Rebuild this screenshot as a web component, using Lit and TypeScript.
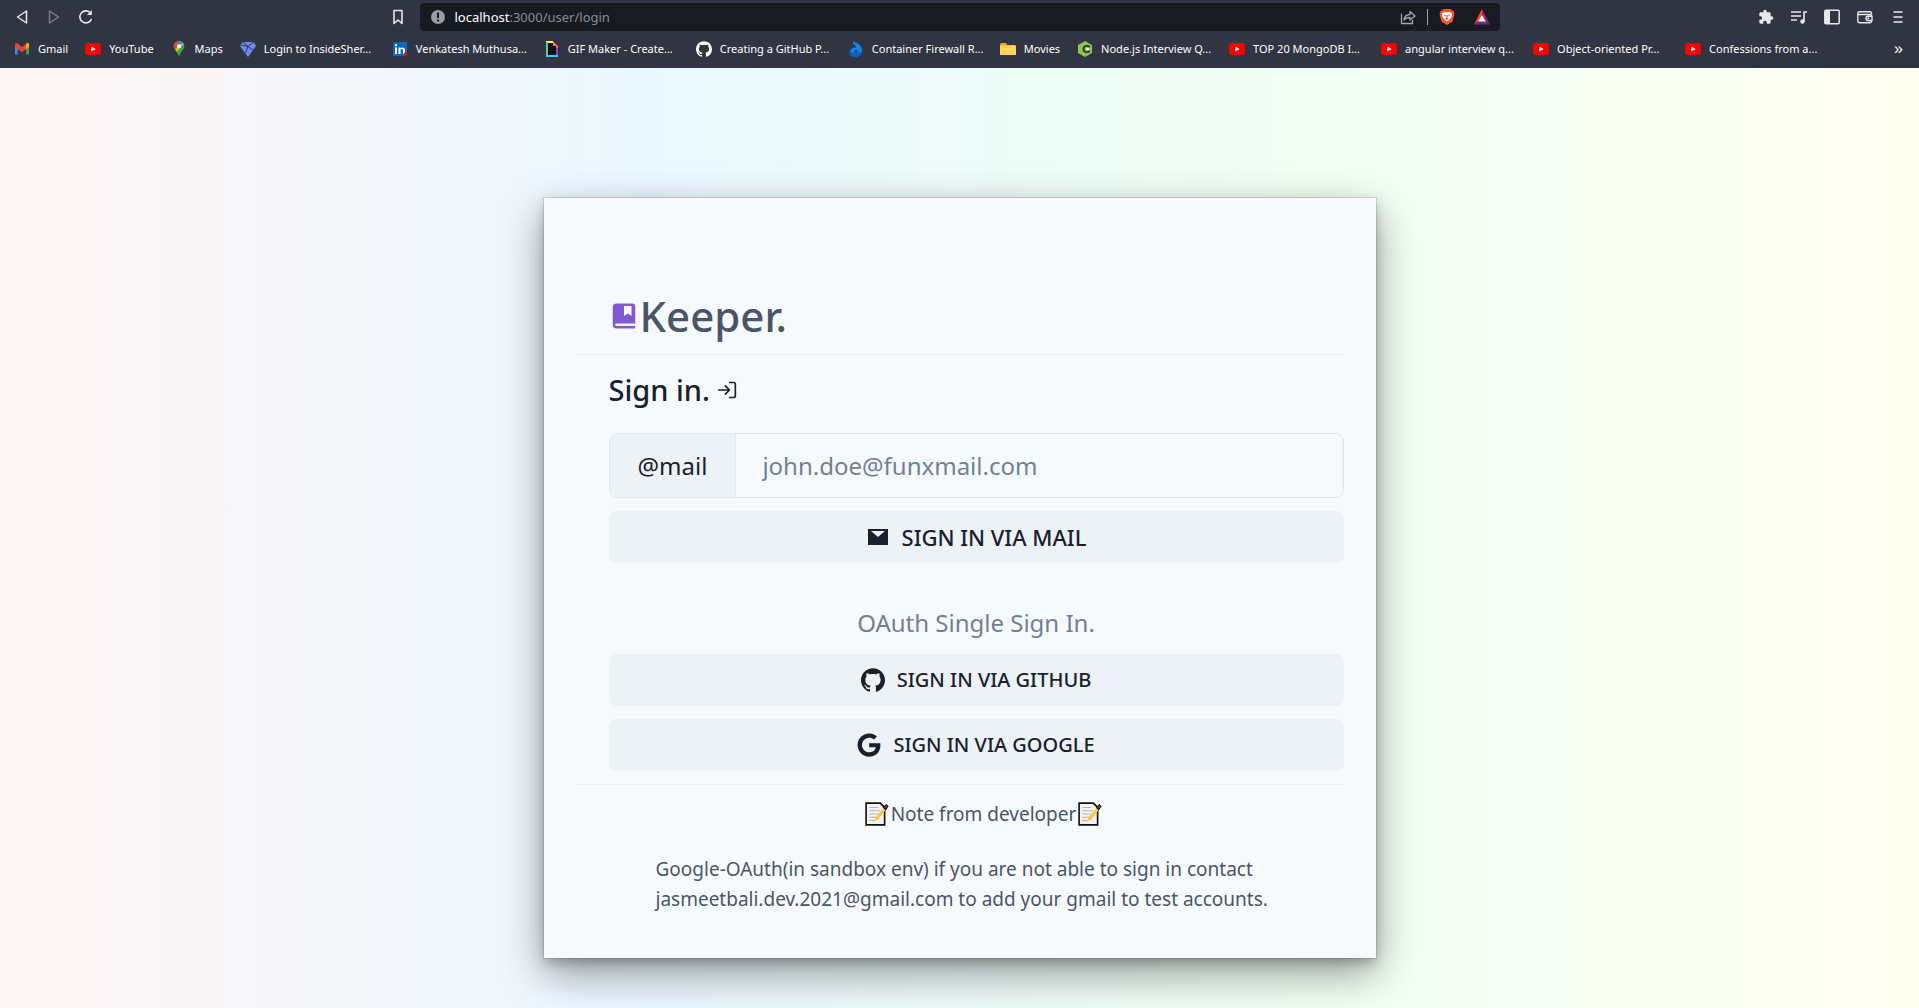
import { LitElement, html, css, svg } from "lit";
import { customElement } from "lit/decorators.js";

const youtube = html`<svg viewBox="0 0 16 16"><rect y="2" width="16" height="12" rx="3" fill="#f00" /><path d="M6.4 5.6v4.8L10.6 8z" fill="#fff" /></svg>`;
const githubPath = svg`<path fill="currentColor" d="M12 .297c-6.63 0-12 5.373-12 12 0 5.303 3.438 9.8 8.205 11.385.6.113.82-.258.82-.577 0-.285-.01-1.04-.015-2.04-3.338.724-4.042-1.61-4.042-1.61C4.422 18.07 3.633 17.7 3.633 17.7c-1.087-.744.084-.729.084-.729 1.205.084 1.838 1.236 1.838 1.236 1.07 1.835 2.809 1.305 3.495.998.108-.776.417-1.305.76-1.605-2.665-.3-5.466-1.332-5.466-5.93 0-1.31.465-2.38 1.235-3.22-.135-.303-.54-1.523.105-3.176 0 0 1.005-.322 3.3 1.23.96-.267 1.98-.399 3-.405 1.02.006 2.04.138 3 .405 2.28-1.552 3.285-1.23 3.285-1.23.645 1.653.24 2.873.12 3.176.765.84 1.23 1.91 1.23 3.22 0 4.61-2.805 5.625-5.475 5.92.42.36.81 1.096.81 2.22 0 1.606-.015 2.896-.015 3.286 0 .315.21.69.825.57C20.565 22.092 24 17.592 24 12.297c0-6.627-5.373-12-12-12" />`;

const bookmarks = [
  { label: "Gmail", wide: false, icon: html`<svg viewBox="0 0 16 16"><path d="M1 3.500v10h2.800V7.600L1 5z" fill="#4285f4" /><path d="M12.200 7.600v5.900H15V5z" fill="#34a853" /><path d="M1 3.500V6l7 5.200L15 6V3.500c0-1.300-1.500-1.800-2.500-1L8 6 3.500 2.500C2.500 1.700 1 2.200 1 3.500z" fill="#ea4335" /><path d="M12.200 2.800V8L15 6V3.500c0-1.500-1.800-1.700-2.800-.7z" fill="#fbbc04" /></svg>` },
  { label: "YouTube", wide: false, icon: youtube },
  { label: "Maps", wide: false, icon: html`<svg viewBox="0 0 16 16"><path d="M8 0C5 0 2.700 2.300 2.700 5.300 2.700 9 7 11 8 16c1-5 5.300-7 5.300-10.700C13.300 2.300 11 0 8 0z" fill="#34a853" /><path d="M8 0c3 0 5.300 2.300 5.300 5.300L10 5.300 6 1z" fill="#4285f4" /><path d="M2.800 4.500C3.100 2 5.300 0 8 0L4.300 8.600C3.400 7.500 2.500 6 2.800 4.500z" fill="#ea4335" /><path d="M4.200 8.600 10.500 2.400l2 .5L5.800 10.700z" fill="#fbbc04" /><circle cx="8" cy="5.300" r="2" fill="#fff" /></svg>` },
  { label: "Login to InsideSher...", wide: true, icon: html`<svg viewBox="0 0 16 16"><path d="M2.500 1h11L16 5 8 16 0 5z" fill="#6b8af2" /><path d="M1 4l7 1.500L13.500 1M8 5.500 5.500 12M8 5.500l5 3.500M3 1l5 4.500" stroke="#313443" fill="none" /></svg>` },
  { label: "Venkatesh Muthusa...", wide: true, icon: html`<svg viewBox="0 0 16 16"><rect x="1" y="1" width="14" height="14" fill="#0a66c2" /><path d="M3 6.500h2V13H3zM3 3.300h2v2H3zM6.500 6.500h2v1c1.200-1.800 4.500-1.500 4.500 1.500v4h-2V9.500c0-2-2.500-1.700-2.500 0V13h-2z" fill="#fff" /><circle cx="13.500" cy="13.500" r="2" fill="#d11" /></svg>` },
  { label: "GIF Maker - Create...", wide: true, icon: html`<svg viewBox="0 0 16 16"><path d="M2 0h7l5 5v11H2z" fill="#121212" /><path d="M2 0h7v2H2z" fill="#fff35c" /><path d="M2 1h2v14H2z" fill="#5fc98a" /><path d="M2 14h12v2H2z" fill="#3cf" /><path d="M12 6h2v8h-2z" fill="#7b4fb5" /><path d="M9 0l5 5v2h-2V5H9z" fill="#f66" /></svg>` },
  { label: "Creating a GitHub P...", wide: true, icon: html`<svg viewBox="0 0 24 24">${githubPath}</svg>` },
  { label: "Container Firewall R...", wide: true, icon: html`<svg viewBox="0 0 16 16"><path d="M5 0c2 2 9 2.500 9 9 0 4-3 7-6.500 7S2 13.500 2 11s2-4.500 6-4.500C9 4.500 4 4 5 0z" fill="#0b84f0" /><path d="M2 11c2 1 6 1 11.700 0C12.500 15 9.500 16 7.500 16 4 16 2 13.500 2 11z" fill="#0561c7" /><circle cx="8" cy="10.300" r="1.600" fill="#24406e" /></svg>` },
  { label: "Movies", wide: false, icon: html`<svg viewBox="0 0 16 16"><path d="M0 3.500C0 2.600.600 2 1.500 2H6l1.500 2h7c.9 0 1.500.6 1.500 1.500v7c0 .9-.6 1.500-1.500 1.500h-13C.600 14 0 13.400 0 12.500z" fill="#e8aa27" /><rect y="4.500" width="16" height="9.500" rx="1" fill="#ffd35c" /></svg>` },
  { label: "Node.js Interview Q...", wide: true, icon: html`<svg viewBox="0 0 16 16"><path d="M8 0l7 4v8l-7 4-7-4V4z" fill="#8cc84b" /><path d="M13 6C11 4 6.500 4.500 6.500 8s4.500 4 6.500 2" fill="none" stroke="#313443" stroke-width="1.800" /><path d="M9.500 7h2.500v2H9.500z" fill="#fff" /></svg>` },
  { label: "TOP 20 MongoDB I...", wide: true, icon: youtube },
  { label: "angular interview q...", wide: true, icon: youtube },
  { label: "Object-oriented Pr...", wide: true, icon: youtube },
  { label: "Confessions from a...", wide: true, icon: youtube },
];

@customElement("browser-bar")
class BrowserBar extends LitElement {
  static styles = css`
    :host { display: block; background: #313443; color: #fff; font: 11px/16px "Noto Sans", "Open Sans", sans-serif; }
    svg { display: block; width: 16px; height: 16px; flex: none; }
    button { display: block; padding: 0; border: 0; background: none; color: #e8e8ec; }
    .toolbar { display: grid; grid-template-columns: 1fr minmax(0, 1080px) 1fr; align-items: center; padding-top: 3px; }
    .nav { display: flex; align-items: center; gap: 16px; padding: 0 14px; }
    .nav .save { margin-left: auto; }
    .dim { opacity: 0.4; }
    .address { display: flex; align-items: center; gap: 9px; height: 28px; box-sizing: border-box; padding: 0 10px; border-radius: 4px; background: #181a21; }
    .url { flex: 1; min-width: 0; font-size: 13px; color: #8b8d95; }
    .host { color: #fff; }
    .rule { width: 1px; height: 16px; background: #a5a6ab; }
    .badges { display: flex; align-items: center; gap: 11px; }
    .badges .bat { margin-left: 8px; }
    .tools { display: flex; justify-content: flex-end; gap: 17px; padding: 0 13px; }
    .bookmarks { display: flex; align-items: center; height: 37px; box-sizing: border-box; padding: 0 16px 2px 14px; }
    .bookmark { display: flex; align-items: center; gap: 8px; padding-right: 17px; box-sizing: border-box; color: inherit; text-decoration: none; white-space: nowrap; }
    .wide { width: 152px; }
    .more { margin-left: auto; font-size: 16px; color: #fff; }
  `;

  render() {
    return html`
      <div class="toolbar">
        <nav class="nav" aria-label="History">
          <button aria-label="Back"><svg viewBox="0 0 16 16"><path d="M12.500 2v12L3.500 8z" fill="none" stroke="currentColor" stroke-width="1.500" stroke-linejoin="round" /></svg></button>
          <button class="dim" aria-label="Forward"><svg viewBox="0 0 16 16"><path d="M3.500 2v12l9-6z" fill="none" stroke="currentColor" stroke-width="1.500" stroke-linejoin="round" /></svg></button>
          <button aria-label="Reload"><svg viewBox="0 0 16 16"><path d="M13.500 10A6 6 0 1 1 12 3.500" fill="none" stroke="currentColor" stroke-width="1.600" /><path d="M13.800 1v5H9z" fill="currentColor" /></svg></button>
          <button class="save" aria-label="Bookmark this page"><svg viewBox="0 0 16 16"><path d="M4 1.500h8v13L8 11l-4 3.500z" fill="none" stroke="currentColor" stroke-width="1.600" stroke-linejoin="round" /></svg></button>
        </nav>
        <div class="address">
          <svg viewBox="0 0 16 16"><circle cx="8" cy="8" r="7" fill="#9a9ca5" /><path d="M7 3.500h2v5.500H7zM7 10.500h2v2H7z" fill="#181a21" /></svg>
          <span class="url"><span class="host">localhost</span>:3000/user/login</span>
          <div class="badges">
            <button aria-label="Share"><svg viewBox="0 0 16 16"><path d="M1.500 4.500v10h11V11" fill="none" stroke="#a5a6ab" stroke-width="1.300" /><path d="M4 11c.5-4 3-5.500 6-5.500V2.500L15 7l-5 4V8.500C7.500 8.500 5.500 9 4 11z" fill="none" stroke="#a5a6ab" stroke-width="1.300" stroke-linejoin="round" /></svg></button>
            <span class="rule"></span>
            <button aria-label="Shields"><svg viewBox="0 0 16 16"><path d="M4.500 0h7l1.300 1.300L14.500 2l1 3-2 7.500L8 16l-5.500-3.500L.500 5l1-3 1.700-.7z" fill="#fb542b" /><path d="M3 4.500 5.500 3h5L13 4.500 12.500 8 10 11l-2 1.500L6 11 3.500 8z" fill="#fff" /><path d="M4.500 5.500l2.500.8-1 1.200zM11.500 5.500 9 6.300l1 1.200zM7.300 6h1.400v3l1 1L8 10.700 6.300 10l1-1z" fill="#fb542b" /></svg></button>
            <button class="bat" aria-label="Rewards"><svg viewBox="0 0 16 16"><path d="M8 0v6.500L4.500 12.500 0 15.500z" fill="#ff4724" /><path d="M8 0l8 15.500-4.500-3L8 6.500z" fill="#9e1f63" /><path d="M0 15.500h16l-4.500-3.500h-7z" fill="#662d91" /><path d="M8 6l3.800 6.500H4.200z" fill="#fff" /></svg></button>
          </div>
        </div>
        <div class="tools">
          <button aria-label="Extensions"><svg viewBox="0 0 24 24"><path d="M20.500 11H19V7c0-1.100-.9-2-2-2h-4V3.500a2.500 2.500 0 0 0-5 0V5H4c-1.100 0-1.990.9-1.990 2v3.800H3.500a2.700 2.700 0 0 1 0 5.400H2V20c0 1.100.9 2 2 2h3.800v-1.500a2.700 2.700 0 0 1 5.400 0V22H17c1.100 0 2-.9 2-2v-4h1.500a2.500 2.500 0 0 0 0-5z" fill="currentColor" /></svg></button>
          <button aria-label="Media"><svg viewBox="0 0 16 16"><path d="M0 3h10M0 7h10M0 11h6M13 12.500V3h3" fill="none" stroke="currentColor" stroke-width="1.600" /><circle cx="11.500" cy="12.500" r="2.200" fill="currentColor" /></svg></button>
          <button aria-label="Sidebar"><svg viewBox="0 0 16 16"><rect x=".8" y="1.300" width="14.400" height="13.400" rx="1" fill="none" stroke="currentColor" stroke-width="1.500" /><path d="M1 1.500h5v13H1z" fill="currentColor" /></svg></button>
          <button aria-label="Wallet"><svg viewBox="0 0 16 16"><path d="M14.500 5V4.500c0-1-.5-1.700-1.500-1.700H2.500C1.500 2.800.800 3.500.800 4.500v7c0 1.500.7 2.200 2 2.200H13c1 0 1.500-.7 1.500-1.700M1 5.500h12c1.500 0 1.500.5 1.500 1.500M15 7.200h-4c-2.700 0-2.700 4.300 0 4.300h4z" fill="none" stroke="currentColor" stroke-width="1.400" /><circle cx="11.300" cy="9.300" r="1" fill="currentColor" /></svg></button>
          <button aria-label="Menu"><svg viewBox="0 0 16 16"><path d="M3.500 3h9M3.500 8h9M3.500 13h9" stroke="currentColor" stroke-width="1.500" /></svg></button>
        </div>
      </div>
      <nav class="bookmarks" aria-label="Bookmarks">
        ${bookmarks.map((b) => html`<a class="bookmark ${b.wide ? "wide" : ""}" href="#">${b.icon}<span>${b.label}</span></a>`)}
        <button class="more" aria-label="More bookmarks">»</button>
      </nav>
    `;
  }
}

const memo = html`<svg class="memo" viewBox="0 0 22 22"><path d="M1 1h13l4 4v16H1z" fill="#f3f3f3" stroke="#111" stroke-width="1.500" /><path d="M4 5h8M4 8h10M4 11h9M4 14h7M4 17h5" stroke="#b5b5b5" /><path d="M8 18l2-4 8-10 2 2-8 10z" fill="#ffc83d" /><path d="M17 5l2.500-2.500 1.500 1.500-2 3z" fill="#8a4b46" stroke="#111" /></svg>`;

@customElement("app-root")
class AppRoot extends LitElement {
  static styles = css`
    :host { display: flex; flex-direction: column; min-height: 100vh; font-family: "Noto Sans", "Open Sans", sans-serif; color: #1a202c; }
    main { flex: 1; display: flex; align-items: flex-start; justify-content: center; padding: 130px 16px 48px; background: linear-gradient(to right, #fff5f5, #ebf8ff, #f0fff4, #fffff0); }
    .card { width: 100%; max-width: 832px; box-sizing: border-box; padding: 88px 32px 44px; background: #f7fafc; box-shadow: 0 0 0 1px rgba(0, 0, 0, 0.1), 0 5px 10px rgba(0, 0, 0, 0.2), 0 15px 40px rgba(0, 0, 0, 0.4); }
    h1, h2, p { margin: 0; }
    h1 { display: flex; align-items: center; gap: 1px; padding: 0 33px; font-size: 42px; line-height: 60px; font-weight: 500; color: #4a5568; }
    hr { margin: 8px 0 0; border: 0; border-top: 1px solid #e8edf3; }
    form, .oauth { display: flex; flex-direction: column; gap: 13px; padding-left: 33px; }
    h2 { display: flex; align-items: center; gap: 7px; padding-top: 15px; margin-bottom: 10px; font-size: 29px; line-height: 40px; font-weight: 500; }
    svg { display: block; flex: none; width: 24px; height: 24px; }
    .book { color: #805ad5; width: 30px; height: 30px; }
    .login { width: 20px; height: 20px; }
    .field { display: flex; height: 65px; box-sizing: border-box; border: 1px solid #e2e8f0; border-radius: 8px; overflow: hidden; }
    label { display: flex; align-items: center; padding: 0 28px; border-right: 1px solid #e2e8f0; background: #edf2f7; font-size: 24px; }
    input { flex: 1; min-width: 0; padding: 0 26px; border: 0; background: none; font: inherit; font-size: 24px; color: inherit; }
    input::placeholder { color: #718096; opacity: 1; }
    .button { display: flex; align-items: center; justify-content: center; gap: 12px; height: 52px; padding: 0; border: 0; border-radius: 8px; background: #edf2f7; color: #1a202c; font: 500 20px/28px "Noto Sans", "Open Sans", sans-serif; }
    .mail { font-size: 22px; }
    .oauth { padding-top: 40px; padding-bottom: 5px; }
    .caption { margin-bottom: -2px; text-align: center; font-size: 24px; line-height: 40px; color: #718096; }
    .note { display: flex; flex-direction: column; align-items: center; gap: 25px; padding: 14px 0 0 48px; font-size: 19px; line-height: 30px; color: #4a5568; }
    .note p { align-self: stretch; padding-left: 32px; }
    .title { display: flex; align-items: center; gap: 2px; }
    .memo { width: 24px; height: 24px; }
  `;

  render() {
    return html`
      <browser-bar></browser-bar>
      <main>
        <section class="card">
          <h1><svg class="book" viewBox="0 0 24 24"><path fill="currentColor" d="M6.012 18H21V4a2 2 0 0 0-2-2H6c-1.206 0-3 .799-3 3v14c0 2.201 1.794 3 3 3h15v-2H6.012C5.550 19.988 5 19.805 5 19s.550-.988 1.012-1zM12 4h6v8l-3-2-3 2z" /></svg>Keeper.</h1>
          <hr />
          <form @submit=${(e: Event) => e.preventDefault()}>
            <h2>Sign in.<svg class="login" viewBox="0 0 24 24" fill="none" stroke="currentColor" stroke-width="2" stroke-linejoin="round" stroke-linecap="round"><path d="M2 12h13M10 7l5 5-5 5M15 3h5c1 0 2 1 2 2v14c0 1-1 2-2 2h-5" /></svg></h2>
            <div class="field">
              <label for="mail">@mail</label>
              <input id="mail" type="email" placeholder="john.doe@funxmail.com" />
            </div>
            <button class="button mail"><svg viewBox="0 0 24 24"><path fill="currentColor" fill-rule="evenodd" d="M2 4h20v16H2zM5 6l7 6 7-6z" /></svg>SIGN IN VIA MAIL</button>
          </form>
          <div class="oauth">
            <p class="caption">OAuth Single Sign In.</p>
            <button class="button"><svg viewBox="0 0 24 24">${githubPath}</svg>SIGN IN VIA GITHUB</button>
            <button class="button"><svg viewBox="-6 0 500 512"><path fill="currentColor" d="M488 261.800C488 403.300 391.100 504 248 504 110.800 504 0 393.200 0 256S110.800 8 248 8c66.800 0 123 24.500 166.300 64.900l-67.500 64.900C258.500 52.600 94.300 116.600 94.300 256c0 86.500 69.100 156.600 153.700 156.600 98.200 0 135-70.400 140.800-106.900H248v-85.300h236.100c2.300 12.700 3.900 24.900 3.900 41.400z" /></svg>SIGN IN VIA GOOGLE</button>
          </div>
          <hr />
          <div class="note">
            <div class="title">${memo}Note from developer${memo}</div>
            <p>Google-OAuth(in sandbox env) if you are not able to sign in contact<br />jasmeetbali.dev.2021@gmail.com to add your gmail to test accounts.</p>
          </div>
        </section>
      </main>
    `;
  }
}
